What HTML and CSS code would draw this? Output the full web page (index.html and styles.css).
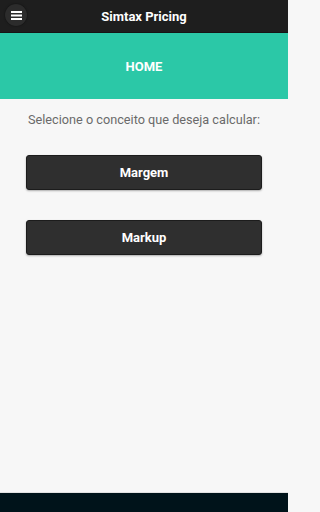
FILE: index.html
```html
<!DOCTYPE html>
<html lang="pt">
<head>
<meta charset="utf-8">
<meta name="viewport" content="width=288">
<link rel="stylesheet" href="styles.css">
</head>
<body>
<div class="app">
  <header class="topbar">
    <button class="menu-btn" aria-label="menu">
      <svg width="11" height="9" viewBox="0 0 11 9"><rect x="0" y="0" width="11" height="2" fill="#fff"/><rect x="0" y="3.5" width="11" height="2" fill="#fff"/><rect x="0" y="7" width="11" height="2" fill="#fff"/></svg>
    </button>
    <h1 class="title">Simtax Pricing</h1>
  </header>
  <section class="banner">HOME</section>
  <main class="content">
    <p class="prompt">Selecione o conceito que deseja calcular:</p>
    <button class="action">Margem</button>
    <button class="action">Markup</button>
  </main>
  <footer class="navbar"></footer>
</div>
</body>
</html>
```
FILE: styles.css
```css
* { box-sizing: border-box; }
html, body { margin: 0; padding: 0; height: 100%; }
body { font-family: Roboto, "Liberation Sans", sans-serif; background: #f7f7f7; }
.app { display: flex; flex-direction: column; width: 288px; height: 512px; }
.topbar {
  height: 33px; background: #1e1e1e; border-bottom: 1px solid #151515;
  display: flex; align-items: center; justify-content: center; position: relative;
}
.menu-btn {
  position: absolute; left: 5px; top: 4px; width: 22px; height: 22px; border-radius: 50%;
  border: none; background: #2c2c2c; box-shadow: 0 0 2px rgba(0,0,0,0.6); padding: 0;
  display: flex; align-items: center; justify-content: center;
}
.title { margin: 0; color: #fff; font-size: 13px; font-weight: 700; }
.banner {
  height: 66px; background: #2bc8a7; color: #fff; font-weight: 700; font-size: 13px;
  display: flex; align-items: center; justify-content: center;
}
.content { flex: 1; display: flex; flex-direction: column; align-items: center; padding-top: 13px; border-bottom: 1px solid #e2e2e2; }
.prompt { margin: 0 0 27px; color: #6a6a6a; font-size: 12.7px; line-height: 16px; }
.action {
  width: 236px; height: 35px; margin-bottom: 30px; background: #2f2f2f; color: #fff;
  border: 1px solid #1c1c1c; border-radius: 3px; font-family: inherit; font-weight: 700; font-size: 13px;
  box-shadow: 0 1px 2px rgba(0,0,0,0.3);
}
.navbar { height: 19px; background: #00131a; }
```
